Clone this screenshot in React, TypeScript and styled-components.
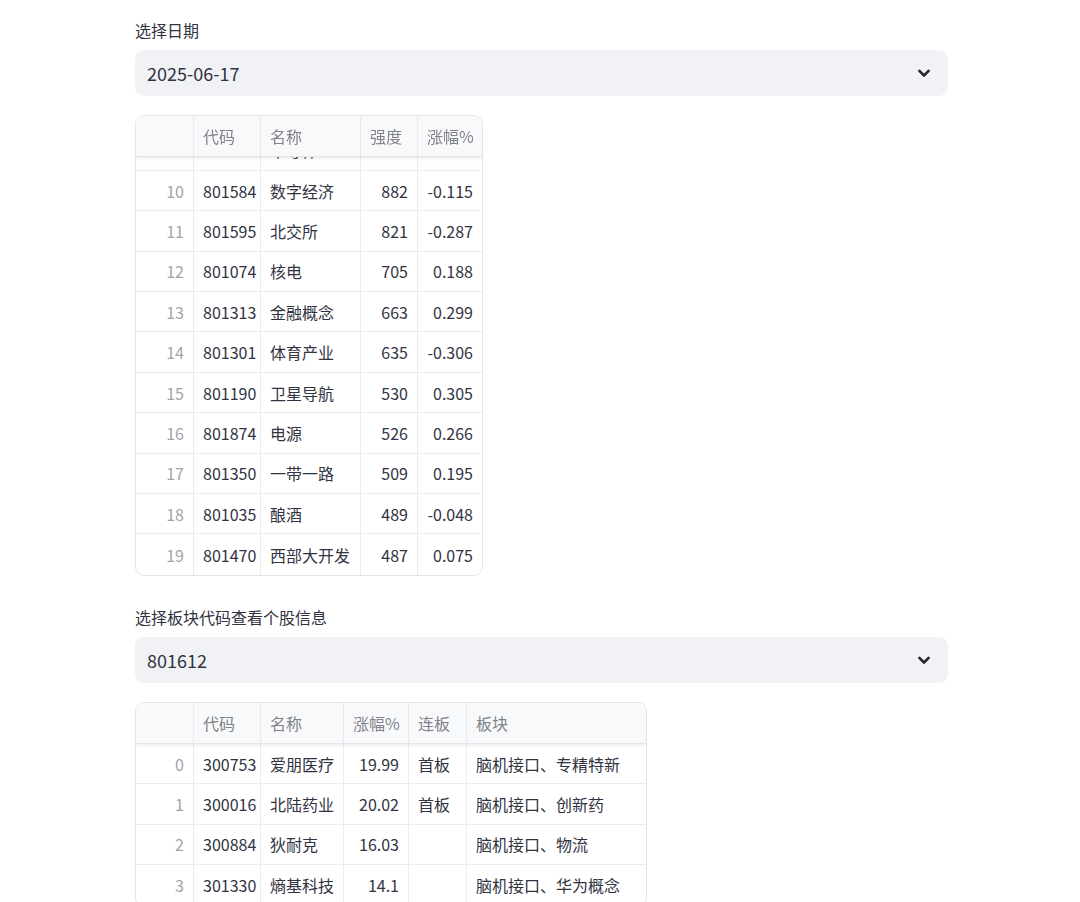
import React, { useLayoutEffect, useRef } from 'react';
import styled, { createGlobalStyle } from 'styled-components';

const GlobalStyle = createGlobalStyle`
  html, body {
    margin: 0;
    padding: 0;
    background: #ffffff;
    overflow: hidden;
  }
  body {
    font-family: "Noto Sans CJK SC", "Noto Sans", sans-serif;
    color: #31333f;
  }
`;

type Cell = string | number;
type Align = 'left' | 'right';

interface Column {
  title: string;
  width: number;
  align: Align;
}

const sectorColumns: Column[] = [
  { title: '', width: 58, align: 'right' },
  { title: '代码', width: 67, align: 'left' },
  { title: '名称', width: 100, align: 'left' },
  { title: '强度', width: 57, align: 'right' },
  { title: '涨幅%', width: 64, align: 'right' },
];

const sectorRows: Cell[][] = [
  [0, '801612', '脑机接口', 2135, '3.412'],
  [1, '801159', '创新药', 1876, '1.905'],
  [2, '801017', '医疗器械', 1542, '1.274'],
  [3, '801745', '专精特新', 1388, '0.862'],
  [4, '801202', '华为概念', 1210, '0.531'],
  [5, '801903', '物流', 1104, '0.417'],
  [6, '801365', '人工智能', 1011, '0.392'],
  [7, '801518', '机器人概念', 967, '0.214'],
  [8, '801076', '军工', 931, '-0.083'],
  [9, '801428', '半导体', 905, '0.127'],
  [10, '801584', '数字经济', 882, '-0.115'],
  [11, '801595', '北交所', 821, '-0.287'],
  [12, '801074', '核电', 705, '0.188'],
  [13, '801313', '金融概念', 663, '0.299'],
  [14, '801301', '体育产业', 635, '-0.306'],
  [15, '801190', '卫星导航', 530, '0.305'],
  [16, '801874', '电源', 526, '0.266'],
  [17, '801350', '一带一路', 509, '0.195'],
  [18, '801035', '酿酒', 489, '-0.048'],
  [19, '801470', '西部大开发', 487, '0.075'],
];

const stockColumns: Column[] = [
  { title: '', width: 58, align: 'right' },
  { title: '代码', width: 67, align: 'left' },
  { title: '名称', width: 83, align: 'left' },
  { title: '涨幅%', width: 65, align: 'right' },
  { title: '连板', width: 58, align: 'left' },
  { title: '板块', width: 179, align: 'left' },
];

const stockRows: Cell[][] = [
  [0, '300753', '爱朋医疗', '19.99', '首板', '脑机接口、专精特新'],
  [1, '300016', '北陆药业', '20.02', '首板', '脑机接口、创新药'],
  [2, '300884', '狄耐克', '16.03', '', '脑机接口、物流'],
  [3, '301330', '熵基科技', '14.1', '', '脑机接口、华为概念'],
];

const Main = styled.div`
  margin: 0 132px 0 135px;
  padding-top: 19px;
  display: flex;
  flex-direction: column;
`;

const Field = styled.div`
  display: flex;
  flex-direction: column;
  gap: 9px;
`;

const Label = styled.div`
  font-size: 16px;
  line-height: 22px;
  color: #31333f;
`;

const SelectBox = styled.div`
  height: 46px;
  box-sizing: border-box;
  border-radius: 9px;
  background: #f0f2f6;
  display: flex;
  align-items: center;
  justify-content: space-between;
  padding: 0 14px 0 12px;
  font-size: 18px;
  color: #31333f;
`;

const Chevron = styled.svg`
  width: 20px;
  height: 20px;
  color: #262730;
`;

const TableFrame = styled.div<{ $height?: number; $gapTop: number; $gapBottom: number }>`
  align-self: flex-start;
  margin: ${(p) => p.$gapTop}px 0 ${(p) => p.$gapBottom}px;
  border: 1px solid #e4e5e8;
  border-radius: 9px;
  overflow-y: ${(p) => (p.$height ? 'auto' : 'hidden')};
  height: ${(p) => (p.$height ? `${p.$height}px` : 'auto')};
  box-sizing: border-box;
  scrollbar-width: none;
  &::-webkit-scrollbar {
    display: none;
  }
`;

const HeaderRow = styled.div<{ $cols: string }>`
  position: sticky;
  top: 0;
  z-index: 1;
  display: grid;
  grid-template-columns: ${(p) => p.$cols};
  height: 41px;
  background: #f8f9fb;
  border-bottom: 1px solid #e4e5e8;
  box-sizing: border-box;
  box-shadow: 0 2px 3px rgba(49, 51, 63, 0.08);
`;

const HeaderCell = styled.div`
  display: flex;
  align-items: center;
  padding: 0 9px;
  font-size: 16px;
  color: #808289;
  border-right: 1px solid #e9eaed;
  white-space: nowrap;
  &:last-child {
    border-right: none;
  }
`;

const BodyRow = styled.div<{ $cols: string }>`
  display: grid;
  grid-template-columns: ${(p) => p.$cols};
  height: 40.4px;
  box-sizing: border-box;
  border-bottom: 1px solid #ececef;
  &:last-child {
    border-bottom: none;
  }
`;

const DataCell = styled.div<{ $align: Align; $muted?: boolean }>`
  display: flex;
  align-items: center;
  justify-content: ${(p) => (p.$align === 'right' ? 'flex-end' : 'flex-start')};
  padding: 0 9px;
  font-size: 16px;
  color: ${(p) => (p.$muted ? '#a3a4aa' : '#31333f')};
  border-right: 1px solid #ececef;
  white-space: nowrap;
  overflow: hidden;
  &:last-child {
    border-right: none;
  }
`;

function ChevronIcon() {
  return (
    <Chevron viewBox="0 0 24 24" fill="none">
      <path d="M6.5 9.5l5.5 5.5 5.5-5.5" stroke="currentColor" strokeWidth="3.2" strokeLinecap="round" strokeLinejoin="round" />
    </Chevron>
  );
}

function Select({ label, value }: { label: string; value: string }) {
  return (
    <Field>
      <Label>{label}</Label>
      <SelectBox>
        <span>{value}</span>
        <ChevronIcon />
      </SelectBox>
    </Field>
  );
}

interface GridProps {
  columns: Column[];
  rows: Cell[][];
  height?: number;
  gapTop: number;
  gapBottom: number;
  scrollToEnd?: boolean;
}

function DataGrid({ columns, rows, height, gapTop, gapBottom, scrollToEnd }: GridProps) {
  const ref = useRef<HTMLDivElement>(null);
  const cols = columns.map((c) => `${c.width}px`).join(' ');

  useLayoutEffect(() => {
    if (scrollToEnd && ref.current) {
      ref.current.scrollTop = ref.current.scrollHeight;
    }
  }, [scrollToEnd]);

  return (
    <TableFrame ref={ref} $height={height} $gapTop={gapTop} $gapBottom={gapBottom}>
      <HeaderRow $cols={cols}>
        {columns.map((c, i) => (
          <HeaderCell key={i}>{c.title}</HeaderCell>
        ))}
      </HeaderRow>
      {rows.map((row, r) => (
        <BodyRow key={r} $cols={cols}>
          {row.map((cell, i) => (
            <DataCell key={i} $align={columns[i].align} $muted={i === 0}>
              {cell}
            </DataCell>
          ))}
        </BodyRow>
      ))}
    </TableFrame>
  );
}

export default function App() {
  return (
    <>
      <GlobalStyle />
      <Main>
        <Select label="选择日期" value="2025-06-17" />
        <DataGrid columns={sectorColumns} rows={sectorRows} height={461} gapTop={19} gapBottom={30} scrollToEnd />
        <Select label="选择板块代码查看个股信息" value="801612" />
        <DataGrid columns={stockColumns} rows={stockRows} gapTop={19} gapBottom={40} />
      </Main>
    </>
  );
}
